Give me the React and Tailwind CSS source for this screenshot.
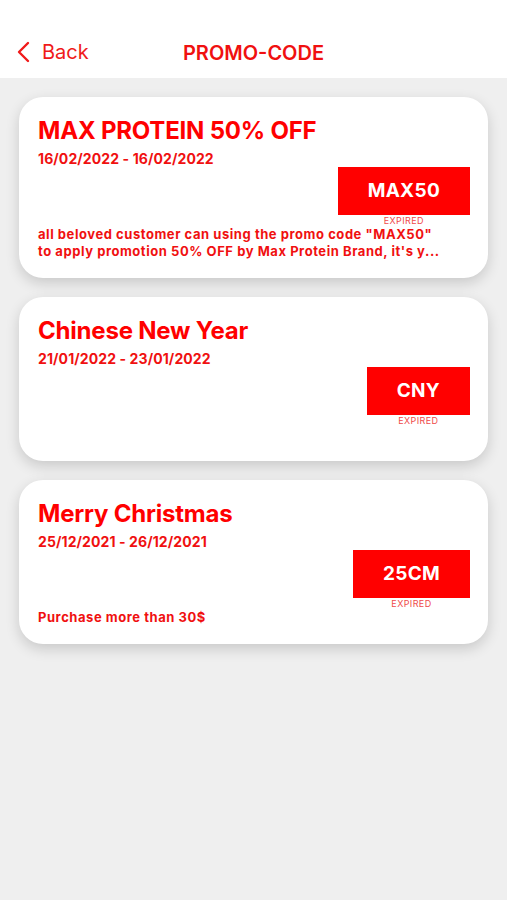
import React from 'react';

const PROMOS = [
  {
    id: 'max50',
    title: 'MAX PROTEIN 50% OFF',
    dates: '16/02/2022 - 16/02/2022',
    code: 'MAX50',
    desc: 'all beloved customer can using the promo code "MAX50" to apply promotion 50% OFF by Max Protein Brand, it\'s y...',
  },
  {
    id: 'cny',
    title: 'Chinese New Year',
    dates: '21/01/2022 - 23/01/2022',
    code: 'CNY',
    desc: '',
  },
  {
    id: '25cm',
    title: 'Merry Christmas',
    dates: '25/12/2021 - 26/12/2021',
    code: '25CM',
    desc: 'Purchase more than 30$',
  },
];

function PromoCard({ promo }) {
  return (
    <div className="bg-white rounded-[24px] shadow-[0_5px_14px_rgba(0,0,0,0.16)] pt-5 pb-[18px] pl-[19px] pr-[18px]">
      <h2 className="text-[24px] leading-[28px] font-bold text-[#ff0000] tracking-[-0.2px]">{promo.title}</h2>
      <p className="mt-[5px] text-[14px] leading-[18px] font-bold text-[#f01010] tracking-[0.1px]">{promo.dates}</p>
      <div className="flex justify-end -mt-px">
        <div className="flex flex-col items-center">
          <div className="h-12 px-[30px] bg-[#ff0000] flex items-center justify-center text-white text-[19px] font-bold tracking-[0.3px]">
            {promo.code}
          </div>
          <span className="text-[9px] leading-[11px] text-[#ef4a4a] tracking-[0.4px]">EXPIRED</span>
        </div>
      </div>
      <p className="min-h-[17px] max-w-[408px] text-[13px] leading-[17px] font-bold text-[#f01010] tracking-[0.55px]">
        {promo.desc}
      </p>
    </div>
  );
}

export default function App() {
  return (
    <div className="min-h-[900px] bg-[#efefef] font-['Inter','Noto_Sans',sans-serif]">
      <header className="h-[78px] bg-white relative flex items-center justify-center pt-[28px]">
        <button className="absolute left-4 top-[40px] flex items-center gap-3 text-[#f01a1a]">
          <svg width="14" height="22" viewBox="0 0 14 22" fill="none">
            <path d="M12 2 L3 11 L12 20" stroke="#f01a1a" strokeWidth="2.4" strokeLinecap="round" strokeLinejoin="round" />
          </svg>
          <span className="text-[20px] leading-6">Back</span>
        </button>
        <h1 className="text-[20px] leading-6 font-semibold text-[#f01010]">PROMO-CODE</h1>
      </header>

      <main className="px-[19px] pt-[19px] flex flex-col gap-[19px]">
        {PROMOS.map((promo) => (
          <PromoCard key={promo.id} promo={promo} />
        ))}
      </main>
    </div>
  );
}
